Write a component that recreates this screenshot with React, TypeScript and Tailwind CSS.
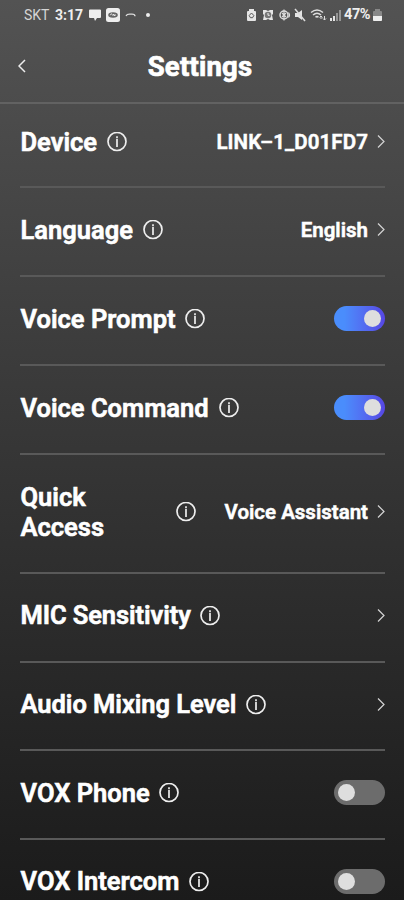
import React from "react";

type Row = {
  label: string;
  labelClass: string;
  value?: string;
  valueClass?: string;
  toggle?: "on" | "off";
  rowClass: string;
};

const rows: Row[] = [
  { label: "Device", labelClass: "w-[76px] whitespace-nowrap", value: "LINK–1_D01FD7", valueClass: "tracking-[0.1px]", rowClass: "h-[84px] pb-1.5" },
  { label: "Language", labelClass: "w-[112px] whitespace-nowrap", value: "English", rowClass: "h-[89px] pb-[3px]" },
  { label: "Voice Prompt", labelClass: "w-[154px] whitespace-nowrap", toggle: "on", rowClass: "h-[89px] pb-[3px]" },
  { label: "Voice Command", labelClass: "w-[188px] whitespace-nowrap", toggle: "on", rowClass: "h-[89px] pb-[3px]" },
  { label: "Quick Access", labelClass: "w-[145px] pr-12", value: "Voice Assistant", rowClass: "h-[119px] pb-[3px]" },
  { label: "MIC Sensitivity", labelClass: "w-[169px] whitespace-nowrap tracking-[-0.1px]", rowClass: "h-[89px] pb-1" },
  { label: "Audio Mixing Level", labelClass: "w-[215px] whitespace-nowrap tracking-[-0.05px]", rowClass: "h-[88px] pb-[3px]" },
  { label: "VOX Phone", labelClass: "w-[128px] whitespace-nowrap", toggle: "off", rowClass: "h-[89px] pb-[3px]" },
  { label: "VOX Intercom", labelClass: "w-[158px] whitespace-nowrap", toggle: "off", rowClass: "h-[89px] pb-1 border-b-0" },
];

function InfoIcon() {
  return (
    <svg className="ml-[10.5px] size-5 shrink-0" viewBox="0 0 20 20" fill="none" stroke="#eee">
      <circle cx="10" cy="9.5" r="9" strokeWidth="1.7" />
      <path d="M10 7V15M10 4.2v2" strokeWidth="1.7" />
    </svg>
  );
}

function Chevron() {
  return (
    <svg className="ml-2 h-3.5 w-2 shrink-0" viewBox="0 0 8 14" fill="none" stroke="#d4d4d4" strokeWidth="1.2">
      <path d="M1 .5l6 6-6 6" />
    </svg>
  );
}

function Toggle({ on }: { on: boolean }) {
  return (
    <div
      className={
        on
          ? "mb-px flex h-[25px] w-[51px] items-center justify-end rounded-full bg-linear-to-r from-[#4a8dfc] from-20% to-[#5646e4] pr-1"
          : "mb-px flex h-[25px] w-[51px] items-center rounded-full bg-[#6c6c6c] pl-1"
      }
    >
      <div className="size-[17px] rounded-full bg-[#dedede]" />
    </div>
  );
}

function StatusBar() {
  return (
    <div className="flex h-[30px] items-center pl-6 pr-[22px] text-[14px] leading-none text-[#eee]">
      <span className="w-[27px] whitespace-nowrap text-[#d5d5d5]">SKT</span>
      <span className="ml-1 w-[29px] whitespace-nowrap font-bold">3:17</span>
      <svg className="ml-[5px] h-4 w-[62px]" viewBox="0 0 62 16" fill="#eee">
        <path d="M1 2.5h10q1 0 1 1V10q0 1-1 1H8l-2 3-1-3H1q-1 0-1-1V3.500q0-1 1-1z" />
        <rect x="17" y="1" width="14" height="14" rx="2.5" />
        <ellipse cx="24" cy="8" rx="4.8" ry="2.8" fill="#666" />
        <path d="M21.5 8.2q0-1.5 1.5-1.4M24 9V7l2 2V7" fill="none" stroke="#eee" strokeWidth=".9" />
        <path d="M37 9q1-2 4-1.800h2q3 0 3 2" fill="none" stroke="#ddd" strokeWidth="1.3" />
        <circle cx="59" cy="8" r="2" />
      </svg>
      <svg className="ml-auto h-4 w-[96px]" viewBox="0 0 96 16" fill="#e5e5e5">
        <path d="M3 2h5v2h1q1 0 1 1v8q0 1-1 1H2q-1 0-1-1V5q0-1 1-1h1z" />
        <path d="M5.5 6L3.2 8.5l1.2 2.200M5.5 6l2.3 2.5-1.2 2.200H4.400" fill="none" stroke="#555" />
        <path d="M17 3h3l2 1 2-1h3v4l-1 1 1 5h-3l-2-1-2 1h-3l1-5-1-1z" />
        <circle cx="22" cy="8" r="3.3" fill="#777" />
        <path d="M22 6v2.300h1.700" fill="none" stroke="#eee" />
        <circle cx="38" cy="8" r="4" fill="none" stroke="#ddd" strokeWidth="1.5" />
        <path d="M38 2.500v11M36 6l4 4M36 10l4-4M42.500 5.500q2 2.500 0 5" fill="none" stroke="#ddd" strokeWidth="1.2" />
        <path d="M49 6h3l4-3v10l-4-3h-3z" />
        <path d="M49 2l10 12" stroke="#ddd" strokeWidth="1.5" />
        <path d="M65 5.5q6-5 12 0M67 8q4-3.500 8 0M69.500 10.300q1.500-1.300 3 0" fill="none" stroke="#ddd" strokeWidth="1.5" />
        <path d="M75 12V9m-1.500 1.500L75 9l1.500 1.500M78.500 9v4m-1.500-1.500l1.500 1.500 1.500-1.500" fill="none" stroke="#ddd" />
        <path d="M84 11h2v3h-2zM87 9h2v5h-2z" />
        <path d="M90 6h2v8h-2zM93 3h2v11h-2z" fill="#969696" />
      </svg>
      <span className="ml-0.5 w-[28px] whitespace-nowrap pt-px text-[14.5px] font-bold tracking-[-0.4px]">47%</span>
      <svg className="ml-px h-3 w-[9px]" viewBox="0 0 9 12">
        <path d="M2 0h5v2h1q1 0 1 1v8q0 1-1 1H1q-1 0-1-1V3q0-1 1-1h1z" fill="#888" />
        <path d="M0 7h9v4q0 1-1 1H1q-1 0-1-1z" fill="#eee" />
      </svg>
    </div>
  );
}

export default function App() {
  return (
    <main className="h-[900px] w-full overflow-hidden bg-linear-to-b from-[#535353] to-[#1b1b1b] font-['Roboto',sans-serif] text-white">
      <StatusBar />
      <header className="grid h-[74px] grid-cols-[1fr_auto_1fr] items-center border-b-2 border-[#626262] px-[18px]">
        <svg className="h-3.5 w-2" viewBox="0 0 8 14" fill="none" stroke="#eee" strokeWidth="1.5">
          <path d="M7 1L1 7l6 6" />
        </svg>
        <h1 className="pt-0.5 pr-1 text-[27.5px] leading-none font-bold tracking-[0.2px] [-webkit-text-stroke:0.7px_white]">Settings</h1>
      </header>
      {rows.map((r) => (
        <section key={r.label} className={`mr-[19px] ml-5 flex items-center border-b-2 border-[#595959] ${r.rowClass}`}>
          <div className={`shrink-0 pl-[0.5px] pt-px text-[25.5px] leading-[29.5px] font-semibold [-webkit-text-stroke:0.6px_white] ${r.labelClass}`}>{r.label}</div>
          <InfoIcon />
          <div className="ml-auto flex items-center">
            {r.value && <span className={`pr-px text-[20.5px] leading-6 font-semibold whitespace-nowrap [-webkit-text-stroke:0.5px_white] ${r.valueClass ?? ""}`}>{r.value}</span>}
            {r.toggle ? <Toggle on={r.toggle === "on"} /> : <Chevron />}
          </div>
        </section>
      ))}
    </main>
  );
}
